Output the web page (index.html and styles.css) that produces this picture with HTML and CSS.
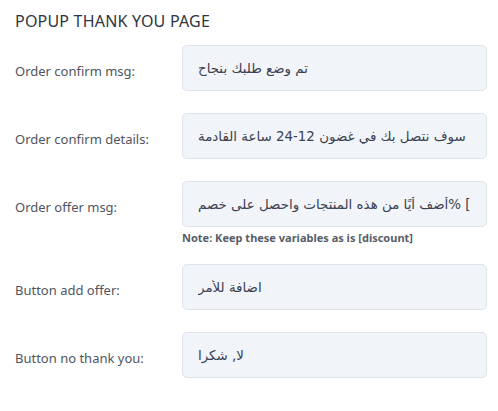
FILE: index.html
```html
<!DOCTYPE html>
<html lang="en">
<head>
<meta charset="utf-8">
<title>Popup Thank You Page</title>
<link rel="stylesheet" href="styles.css">
</head>
<body>
<section class="panel">
  <h2 class="title">POPUP THANK YOU PAGE</h2>
  <div class="row">
    <label class="label" for="f1">Order confirm msg:</label>
    <div class="field"><input id="f1" class="input" type="text" value="تم وضع طلبك بنجاح"></div>
  </div>
  <div class="row">
    <label class="label" for="f2">Order confirm details:</label>
    <div class="field"><input id="f2" class="input" type="text" value="سوف نتصل بك في غضون 12-24 ساعة القادمة"></div>
  </div>
  <div class="row row-note">
    <label class="label" for="f3">Order offer msg:</label>
    <div class="field">
      <input id="f3" class="input" type="text" value="أضف أيًا من هذه المنتجات واحصل على خصم% [discount]">
      <p class="note">Note: Keep these variables as is [discount]</p>
    </div>
  </div>
  <div class="row">
    <label class="label" for="f4">Button add offer:</label>
    <div class="field"><input id="f4" class="input" type="text" value="اضافة للأمر"></div>
  </div>
  <div class="row">
    <label class="label" for="f5">Button no thank you:</label>
    <div class="field"><input id="f5" class="input" type="text" value="لا, شكرا"></div>
  </div>
</section>
</body>
</html>
```
FILE: styles.css
```css
* { box-sizing: border-box; }
html, body { margin: 0; background: #ffffff; }
body {
  font-family: "Noto Sans", "DejaVu Sans", sans-serif;
  color: #444a55;
}
.panel {
  padding: 12px 11px 20px 15px;
}
.title {
  margin: 0 0 15px 0;
  font-size: 16px;
  font-weight: 400;
  line-height: 18px;
  color: #2f3540;
  letter-spacing: 0.2px;
}
.row {
  display: grid;
  grid-template-columns: 167px 1fr;
  align-items: start;
  margin-bottom: 22px;
}
.row-note { margin-bottom: 20px; }
.label {
  font-size: 13px;
  line-height: 18px;
  color: #50555f;
  padding-top: 17px;
}
.field { display: flex; flex-direction: column; }
.input {
  display: block;
  width: 100%;
  height: 46px;
  margin: 0;
  padding: 1px 15px 0 15px;
  border: 1px solid #dfe4ec;
  border-radius: 5px;
  background: #f1f4f9;
  font-family: "DejaVu Sans", sans-serif;
  font-size: 13.4px;
  color: #3b4150;
  outline: none;
}
.note {
  margin: 4px 0 0 0;
  font-size: 11px;
  line-height: 13px;
  font-weight: 700;
  color: #575d68;
}
```
